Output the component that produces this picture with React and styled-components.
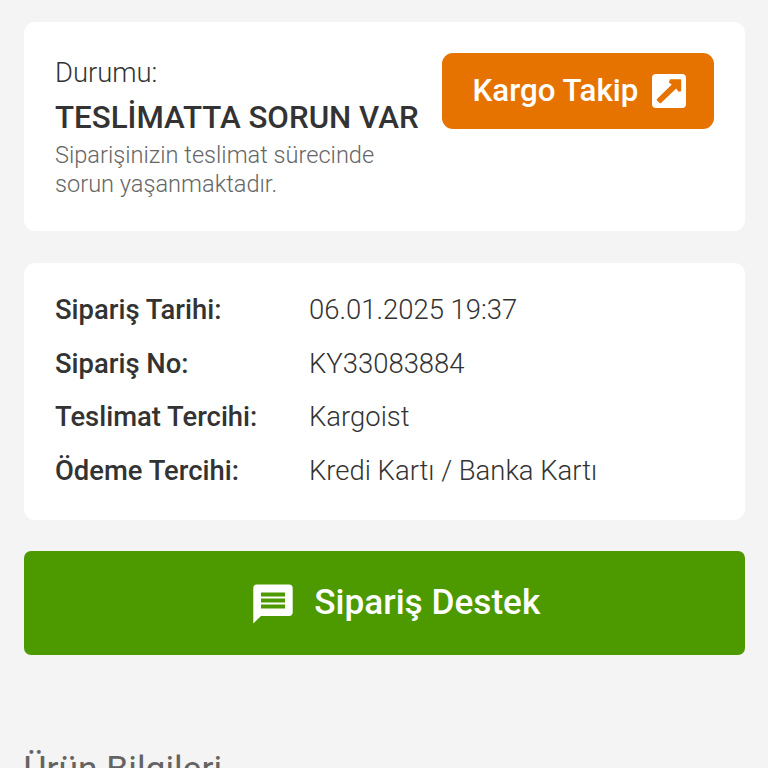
import React from "react";
import styled, { createGlobalStyle } from "styled-components";

const ORDER_INFO = [
  { label: "Sipariş Tarihi:", value: "06.01.2025 19:37" },
  { label: "Sipariş No:", value: "KY33083884" },
  { label: "Teslimat Tercihi:", value: "Kargoist" },
  { label: "Ödeme Tercihi:", value: "Kredi Kartı / Banka Kartı" },
];

const TrackIcon = () => (
  <svg width="34" height="34" viewBox="0 0 34 34">
    <rect width="34" height="34" rx="4" fill="#fff" />
    <path
      d="M18 5.2H28.4q.8 0 .8.8V17.2l-2.8.6-2.2-3.2L9 29q-.7.6-1.4 0l-2.6-2.6q-.6-.7 0-1.4L19.8 10.6l-3-2z"
      fill="#e67300"
    />
  </svg>
);

const ChatIcon = () => (
  <svg width="40" height="40" viewBox="0 0 40 40">
    <path
      d="M4 0.5h32a3.7 3.7 0 0 1 3.7 3.7v24a3.7 3.7 0 0 1-3.7 3.7H8L0.3 39.5V4.2A3.7 3.7 0 0 1 4 0.5z"
      fill="#fff"
    />
    <path d="M8 8.4h24v4H8zM8 14.4h24v4H8zM8 20.4h24v4H8z" fill="#4c9a00" />
  </svg>
);

const App = () => {
  return (
    <>
      <GlobalStyle />
      <Page>
        <StatusCard>
          <StatusText>
            <StatusLabel>Durumu:</StatusLabel>
            <StatusTitle>TESLİMATTA SORUN VAR</StatusTitle>
            <StatusDescription>
              Siparişinizin teslimat sürecinde sorun yaşanmaktadır.
            </StatusDescription>
          </StatusText>
          <TrackButton>
            Kargo Takip
            <TrackIcon />
          </TrackButton>
        </StatusCard>
        <InfoCard>
          {ORDER_INFO.map(({ label, value }) => (
            <InfoRow key={label}>
              <InfoLabel>{label}</InfoLabel>
              <InfoValue>{value}</InfoValue>
            </InfoRow>
          ))}
        </InfoCard>
        <SupportButton>
          <ChatIcon />
          <SupportText>Sipariş Destek</SupportText>
        </SupportButton>
        <SectionTitle>Ürün Bilgileri</SectionTitle>
      </Page>
    </>
  );
};

export default App;

const GlobalStyle = createGlobalStyle`
  * {
    box-sizing: border-box;
  }

  body {
    margin: 0;
    background: #f4f4f4;
    color: #333;
    font-family: Roboto, "Liberation Sans", sans-serif;
  }
`;

const Page = styled.main`
  height: 768px;
  padding: 22px 23px 0 23.5px;
  overflow: hidden;
`;

const Card = styled.section`
  background: #fff;
  border-radius: 11px;
`;

const StatusCard = styled(Card)`
  display: flex;
  justify-content: space-between;
  align-items: flex-start;
  height: 209px;
  padding: 31px 31px 31px 31.5px;
`;

const StatusText = styled.div`
  width: 366px;
`;

const StatusLabel = styled.div`
  font-size: 27.4px;
  font-weight: 300;
  line-height: 40px;
`;

const StatusTitle = styled.h1`
  margin: 0;
  padding-top: 1px;
  font-size: 31.3px;
  font-weight: 500;
  line-height: 48px;
  white-space: nowrap;
`;

const StatusDescription = styled.p`
  width: 330px;
  margin: -1px 0 0;
  color: #666;
  font-size: 23.6px;
  font-weight: 300;
  line-height: 29px;
`;

const TrackButton = styled.button`
  display: flex;
  flex-shrink: 0;
  align-items: center;
  justify-content: space-between;
  width: 272.5px;
  height: 75.5px;
  padding: 0 28px 0 31px;
  border: 0;
  border-radius: 11px;
  background: #e67300;
  color: #fff;
  font-family: inherit;
  font-size: 31.3px;
  font-weight: 500;
`;

const InfoCard = styled(Card)`
  height: 257px;
  margin-top: 31.5px;
  padding: 21.5px 31.5px 20px;
`;

const InfoRow = styled.div`
  display: grid;
  grid-template-columns: 254px 1fr;
  font-size: 27.4px;
  line-height: 53.7px;
`;

const InfoLabel = styled.span`
  font-weight: 500;
`;

const InfoValue = styled.span`
  font-size: 27.45px;
  font-weight: 300;
`;

const SupportButton = styled.button`
  display: flex;
  align-items: center;
  justify-content: center;
  gap: 21px;
  width: 100%;
  height: 104px;
  margin-top: 31.5px;
  padding: 1px 0 0 25px;
  border: 0;
  border-radius: 7px;
  background: #4c9a00;
  color: #fff;
  font-family: inherit;
  font-size: 35.2px;
  font-weight: 500;
`;

const SupportText = styled.span`
  padding-bottom: 4px;
`;

const SectionTitle = styled.h2`
  margin: 93px 0 0;
  color: #636363;
  font-size: 35.4px;
  font-weight: 400;
  line-height: 42px;
`;
